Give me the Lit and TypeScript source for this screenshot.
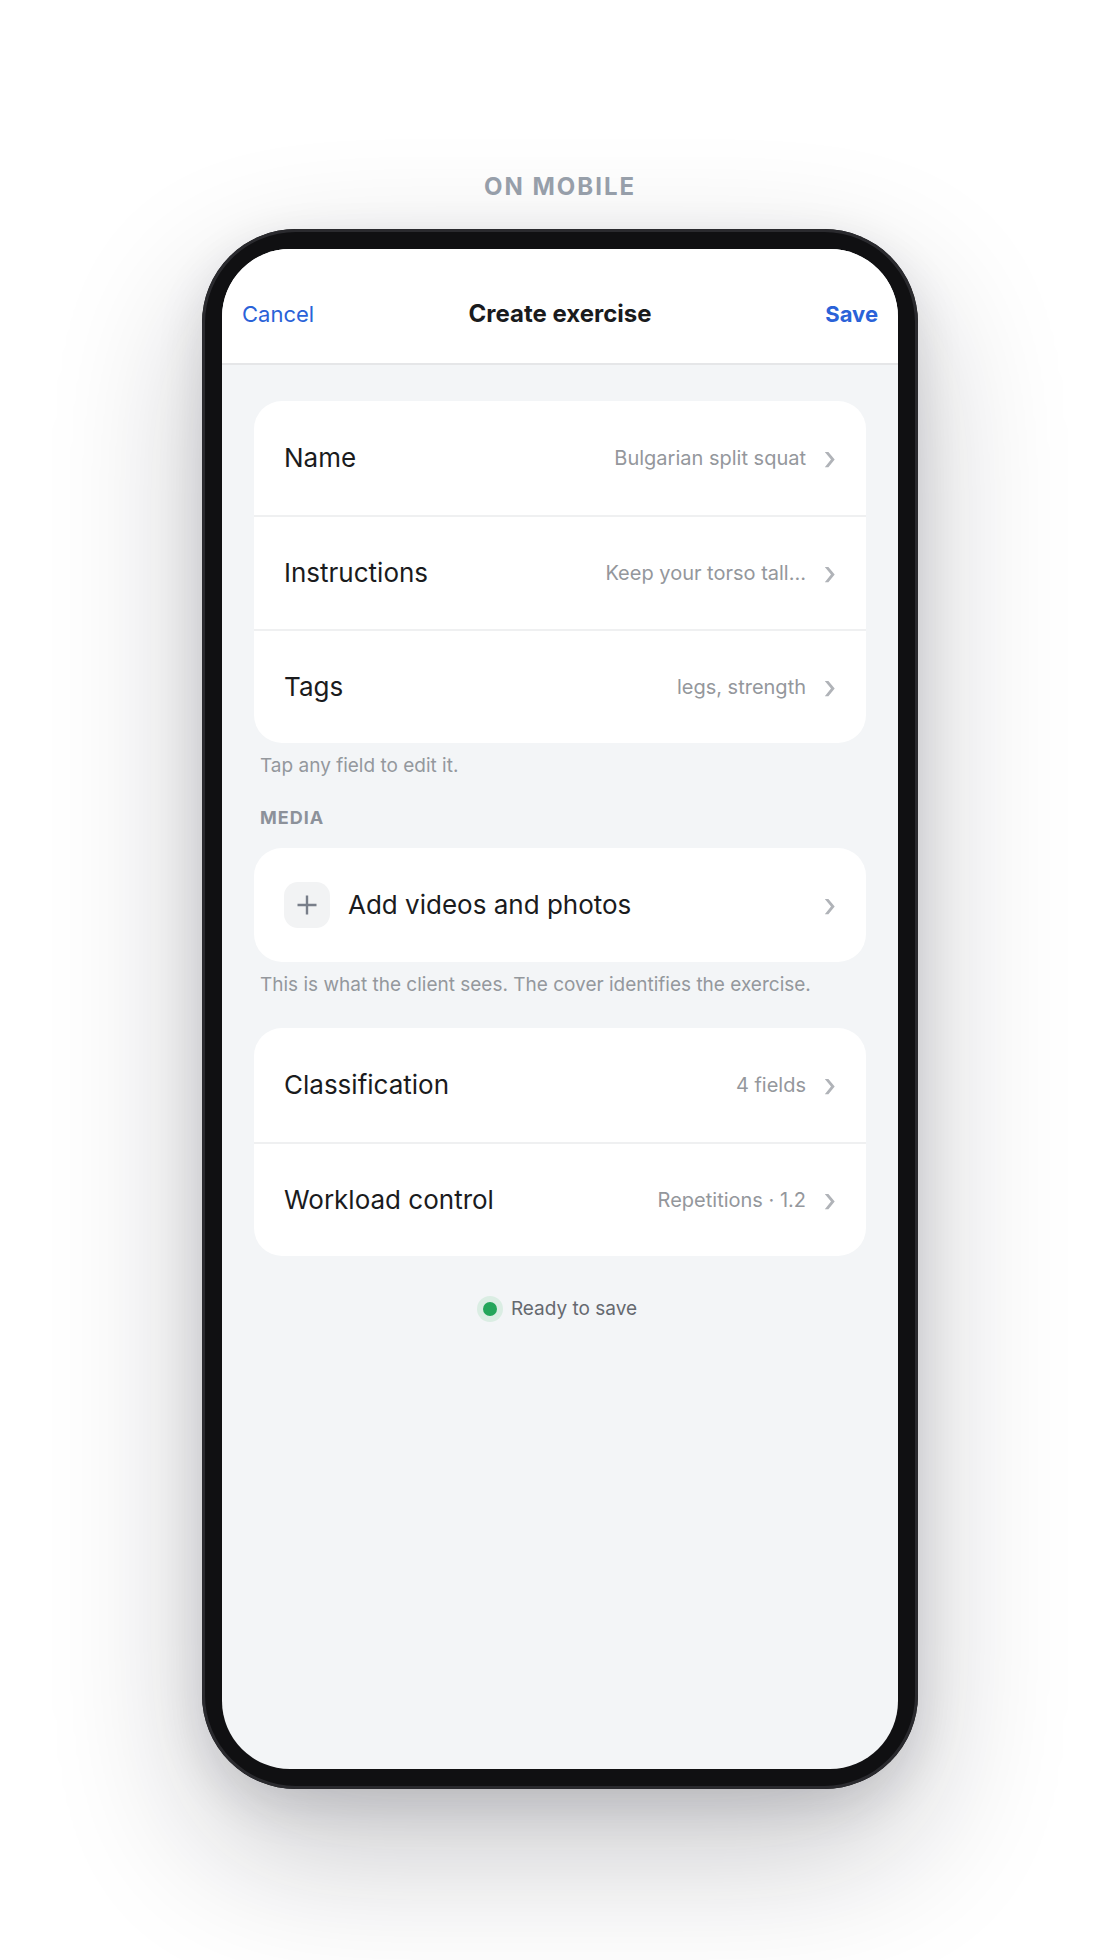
import { LitElement, html, css, svg, nothing } from "lit";
import { customElement, property } from "lit/decorators.js";

interface Row {
  label: string;
  value?: string;
  icon?: "plus";
}

const details: Row[] = [
  { label: "Name", value: "Bulgarian split squat" },
  { label: "Instructions", value: "Keep your torso tall…" },
  { label: "Tags", value: "legs, strength" },
];

const media: Row[] = [{ label: "Add videos and photos", icon: "plus" }];

const settings: Row[] = [
  { label: "Classification", value: "4 fields" },
  { label: "Workload control", value: "Repetitions · 1.2" },
];

const chevron = svg`<path d="M0.8 4H4.4L10.7 11.6L4.4 19.2H0.8L7 11.6Z" fill="#b0b3b8" />`;

const plus = svg`<path d="M10 0.5V19.5M0.5 10H19.5" fill="none" stroke="#787e89" stroke-width="2.4" />`;

/** White rounded card holding a list of tappable rows. */
@customElement("row-group")
export class RowGroup extends LitElement {
  @property({ attribute: false }) rows: Row[] = [];

  static styles = css`
    :host {
      display: block;
    }
    .card {
      margin: 0;
      padding: 0;
      list-style: none;
      background: #fff;
      border-radius: 28px;
      overflow: hidden;
    }
    .item + .item {
      border-top: 2px solid #eff0f1;
    }
    .row {
      display: flex;
      align-items: center;
      gap: 18px;
      box-sizing: border-box;
      width: 100%;
      min-height: 112px;
      padding: 16px 30px;
      border: 0;
      background: none;
      font: inherit;
      text-align: left;
      cursor: pointer;
    }
    .item:first-child .row {
      min-height: 114px;
    }
    .tile {
      display: grid;
      place-items: center;
      flex: none;
      width: 46px;
      height: 46px;
      border-radius: 14px;
      background: #f2f3f4;
    }
    .label {
      flex: 1;
      font-size: 26px;
      line-height: 32px;
      color: #1a1b1d;
    }
    .value {
      font-size: 20px;
      line-height: 28px;
      color: #94979c;
    }
    .icon {
      display: block;
      flex: none;
    }
  `;

  render() {
    return html`
      <ul class="card">
        ${this.rows.map(
          (row) => html`
            <li class="item">
              <button class="row" type="button">
                ${row.icon
                  ? html`<span class="tile">
                      <svg class="icon" width="20" height="20" viewBox="0 0 20 20" aria-hidden="true">${plus}</svg>
                    </span>`
                  : nothing}
                <span class="label">${row.label}</span>
                ${row.value ? html`<span class="value">${row.value}</span>` : nothing}
                <svg class="icon" width="12" height="20" viewBox="0 0 12 20" aria-hidden="true">${chevron}</svg>
              </button>
            </li>
          `,
        )}
      </ul>
    `;
  }
}

@customElement("app-root")
export class AppRoot extends LitElement {
  static styles = css`
    :host {
      display: flex;
      flex-direction: column;
      align-items: center;
      justify-content: center;
      gap: 26px;
      box-sizing: border-box;
      min-height: 100vh;
      padding: 24px;
      overflow: hidden;
      background: #fff;
      font-family: Inter, "Liberation Sans", sans-serif;
    }
    .caption {
      margin: 0;
      font-size: 24px;
      font-weight: 700;
      line-height: 32px;
      letter-spacing: 2px;
      text-transform: uppercase;
      color: #9aa2ad;
    }
    .phone {
      display: flex;
      box-sizing: border-box;
      width: 100%;
      max-width: 716px;
      aspect-ratio: 716 / 1560;
      padding: 20px;
      border-radius: 94px;
      background: #101012;
      box-shadow:
        inset 0 0 0 3px #2a2a2e,
        0 60px 150px rgba(15, 18, 30, 0.24),
        0 16px 48px rgba(15, 18, 30, 0.12);
    }
    .screen {
      flex: 1;
      min-width: 0;
      border-radius: 68px;
      overflow: hidden;
      background: #f3f5f7;
    }
    .bar {
      display: grid;
      grid-template-columns: 1fr auto 1fr;
      align-items: center;
      padding: 45px 20px 29px;
      border-bottom: 2px solid #e5e6e8;
      background: #fff;
    }
    .title {
      margin: 0;
      font-size: 24px;
      font-weight: 700;
      line-height: 40px;
      color: #1a1b1d;
    }
    .action {
      justify-self: start;
      padding: 0;
      border: 0;
      background: none;
      font: inherit;
      font-size: 22px;
      line-height: 40px;
      color: #2a62d8;
      cursor: pointer;
    }
    .action.primary {
      justify-self: end;
      font-weight: 700;
    }
    .content {
      padding: 36px 32px;
    }
    .hint,
    .heading {
      margin: 0;
      padding: 0 6px;
    }
    .hint {
      margin-top: 9px;
      font-size: 19px;
      line-height: 28px;
      color: #94989d;
    }
    .heading {
      margin-top: 26px;
      margin-bottom: 18px;
      font-size: 18px;
      font-weight: 700;
      line-height: 24px;
      letter-spacing: 1px;
      text-transform: uppercase;
      color: #8c919a;
    }
    .settings {
      margin-top: 29px;
    }
    .status {
      display: flex;
      align-items: center;
      justify-content: center;
      gap: 14px;
      margin: 39px 0 0;
      font-size: 19px;
      line-height: 28px;
      color: #65696f;
    }
    .dot {
      width: 14px;
      height: 14px;
      border-radius: 50%;
      background: #23a55a;
      box-shadow: 0 0 0 6px #daede3;
    }
  `;

  render() {
    return html`
      <p class="caption">On mobile</p>
      <main class="phone">
        <div class="screen">
          <header class="bar">
            <button class="action" type="button">Cancel</button>
            <h1 class="title">Create exercise</h1>
            <button class="action primary" type="button">Save</button>
          </header>
          <div class="content">
            <row-group .rows=${details}></row-group>
            <p class="hint">Tap any field to edit it.</p>
            <h2 class="heading">Media</h2>
            <row-group .rows=${media}></row-group>
            <p class="hint">This is what the client sees. The cover identifies the exercise.</p>
            <row-group class="settings" .rows=${settings}></row-group>
            <p class="status" role="status"><span class="dot"></span>Ready to save</p>
          </div>
        </div>
      </main>
    `;
  }
}
